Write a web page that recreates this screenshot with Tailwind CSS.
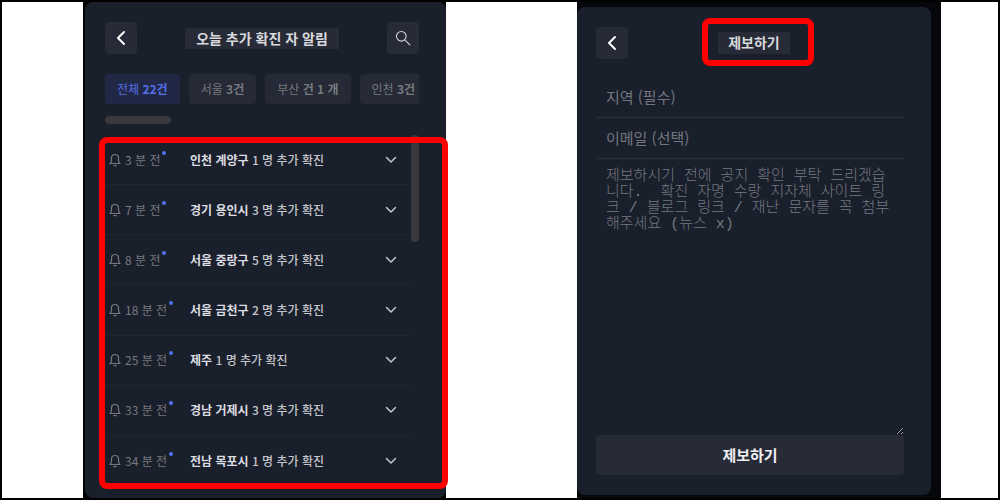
<!DOCTYPE html>
<html lang="ko">
<head>
    <meta charset="UTF-8">
    <meta name="viewport" content="width=device-width, initial-scale=1.0">
    <title>오늘 추가 확진 자 알림</title>
    <script src="https://cdn.jsdelivr.net/npm/@tailwindcss/browser@4"></script>
</head>
<body class="bg-white font-['Noto_Sans_CJK_KR',sans-serif]">

    <div class="min-h-screen border-2 border-black grid grid-cols-[81fr_363fr_131fr_364fr_57fr]">

        <!-- Alert list -->
        <section class="col-start-2 min-w-0 bg-black pl-0.5 flex">
            <div class="flex-1 min-w-0 bg-[#1a1f2c] rounded-lg pl-5 pr-[27px] pt-5 pb-3 flex flex-col">
                <header class="flex items-center justify-between">
                    <button type="button" aria-label="뒤로" class="size-8 rounded bg-[#272a37] flex items-center justify-center text-white">
                        <svg class="w-2.5 h-4" viewBox="0 0 10 16" fill="none" stroke="currentColor" stroke-width="2" stroke-linecap="round" stroke-linejoin="round"><path d="M8 2L2 8l6 6"/></svg>
                    </button>
                    <h1 class="bg-[#272a37] px-[11px] pb-px text-sm leading-5 font-bold text-[#d8d9dc]">오늘 추가 확진 자 알림</h1>
                    <button type="button" aria-label="검색" class="size-8 rounded bg-[#272a37] flex items-center justify-center text-[#d8d9dc]">
                        <svg class="size-4" viewBox="0 0 16 16" fill="none" stroke="currentColor" stroke-width="1.1" stroke-linecap="round"><circle cx="6.3" cy="6.3" r="4.8"/><path d="M9.8 9.8l5 5"/></svg>
                    </button>
                </header>

                <nav class="mt-5 flex gap-[9px] overflow-hidden text-xs text-[#77797d] whitespace-nowrap">
                    <button type="button" class="h-[30px] px-3 rounded bg-[#212845] text-[#5570e8] shrink-0">전체 <b>22건</b></button>
                    <button type="button" class="h-[30px] px-3 rounded bg-[#262936] shrink-0">서울 <b>3건</b></button>
                    <button type="button" class="h-[30px] px-3 rounded bg-[#262936] shrink-0">부산 <b>건 1 개</b></button>
                    <button type="button" class="h-[30px] px-3 rounded bg-[#262936] shrink-0">인천 <b>3건</b></button>
                </nav>
                <div class="mt-3 h-2 w-[21%] rounded-full bg-[#38393b]"></div>

                <div class="relative mt-[11px] flex-1 flex">
                    <ul id="alerts" class="flex-1 grid auto-rows-fr"></ul>
                    <div class="w-2 h-[107px] rounded-full bg-[#38393b]"></div>
                    <!-- Highlight frame -->
                    <div class="absolute -left-1.5 -right-[29px] top-0.5 -bottom-[3px] border-6 border-[#ff0000] rounded-lg pointer-events-none"></div>
                </div>
            </div>
        </section>

        <!-- Report form -->
        <section class="col-start-4 min-w-0 bg-[#06070b] pt-[5px] pr-2.5 pb-[3px] flex">
            <form class="flex-1 min-w-0 bg-[#1a1f2c] rounded-lg pl-[19px] pr-[27px] py-5 flex flex-col">
                <header class="grid grid-cols-[32px_1fr_24px] items-center">
                    <button type="button" aria-label="뒤로" class="size-8 rounded bg-[#272a37] flex items-center justify-center text-white">
                        <svg class="w-2.5 h-4" viewBox="0 0 10 16" fill="none" stroke="currentColor" stroke-width="2" stroke-linecap="round" stroke-linejoin="round"><path d="M8 2L2 8l6 6"/></svg>
                    </button>
                    <div class="relative justify-self-center">
                        <h2 class="bg-[#272a37] px-2.5 pb-0.5 text-sm leading-5 font-bold text-[#d8d9dc]">제보하기</h2>
                        <div class="absolute -left-4 -right-6 -top-3.5 -bottom-3 border-6 border-[#ff0000] rounded-lg pointer-events-none"></div>
                    </div>
                </header>
                <input type="text" aria-label="지역" placeholder="지역 (필수)" class="mt-[18px] h-[41px] w-full px-2.5 pb-0.5 border-b border-[#2c303d] text-[15px] placeholder:text-[#73767e] text-white outline-none">
                <input type="text" aria-label="이메일" placeholder="이메일 (선택)" class="h-[41px] w-full px-2.5 pb-0.5 border-b border-[#2c303d] text-[15px] placeholder:text-[#73767e] text-white outline-none">
                <textarea aria-label="제보 내용" placeholder="제보하시기 전에 공지 확인 부탁 드리겠습니다.  확진 자명 수랑 지자체 사이트 링크 / 블로그 링크 / 재난 문자를 꼭 첨부해주세요 (뉴스 x)" class="flex-1 w-full px-2.5 pt-2.5 font-['Liberation_Mono','Noto_Sans_CJK_KR',monospace] font-light text-[15px] leading-4 placeholder:text-[#747880] text-white outline-none resize-y"></textarea>
                <button type="submit" class="h-10 rounded bg-[#272a37] text-[15px] font-bold text-[#f0f0f2]">제보하기</button>
            </form>
        </section>
    </div>

    <script>
        const alerts = [
            { ago: '3 분 전', place: '인천 계양구', count: 1 },
            { ago: '7 분 전', place: '경기 용인시', count: 3 },
            { ago: '8 분 전', place: '서울 중랑구', count: 5 },
            { ago: '18 분 전', place: '서울 금천구', count: 2 },
            { ago: '25 분 전', place: '제주', count: 1 },
            { ago: '33 분 전', place: '경남 거제시', count: 3 },
            { ago: '34 분 전', place: '전남 목포시', count: 1 },
        ];

        document.getElementById('alerts').innerHTML = alerts.map(a => `
            <li class="flex items-center pl-1 pr-3.5 border-b border-[#202532] last:border-b-0 text-xs whitespace-nowrap">
                <div class="w-[81px] flex items-center text-[#77797f]">
                    <svg class="w-3 h-3.5 mr-1" viewBox="0 0 12 14" fill="none" stroke="currentColor" stroke-width="1.2" stroke-linecap="round" stroke-linejoin="round"><path d="M1 10.5c1-.9 1.5-1.8 1.5-3.5V5a3.5 3.5 0 0 1 7 0v2c0 1.7.5 2.6 1.5 3.500zM4.800 12.600h2.400"/></svg>
                    <span>${a.ago}</span>
                    <span class="size-1 rounded-full bg-[#5273f5] ml-0.5 mb-3.5"></span>
                </div>
                <p class="flex-1 font-medium text-[#c4c5ca]"><b class="text-[#dcdde0]">${a.place}</b> ${a.count} 명 추가 확진</p>
                <button type="button" aria-label="펼치기" class="text-[#c4c5c9]">
                    <svg class="w-3 h-2" viewBox="0 0 12 8" fill="none" stroke="currentColor" stroke-width="1.5" stroke-linecap="round" stroke-linejoin="round"><path d="M1.500 1.500l4.500 4.500 4.500-4.500"/></svg>
                </button>
            </li>`).join('');
    </script>
</body>
</html>
